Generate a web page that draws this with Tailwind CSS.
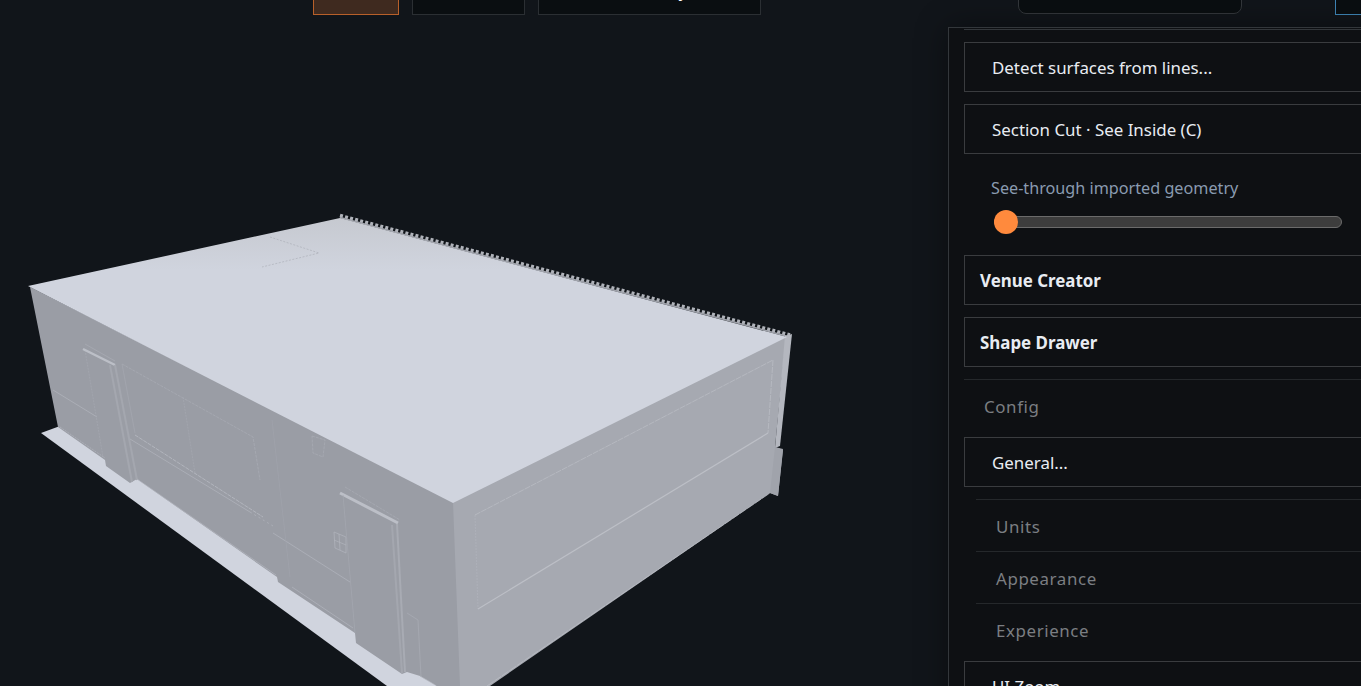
<!DOCTYPE html>
<html lang="en">
<head>
  <meta charset="UTF-8" />
  <title>Venue Viewer</title>
  <script src="https://cdn.jsdelivr.net/npm/@tailwindcss/browser@4"></script>
</head>
<body class="bg-[#11151a] overflow-hidden font-['Noto_Sans',sans-serif]">
  <div class="relative w-[1361px] h-[686px] overflow-hidden">

    <!-- 3D viewport -->
    <svg class="absolute inset-0" width="1361" height="686" viewBox="0 0 1361 686" fill="none">
      <defs>
        <linearGradient id="roofShade" gradientUnits="userSpaceOnUse" x1="0" y1="218" x2="0" y2="270">
          <stop offset="0" stop-color="#c6c9d0" />
          <stop offset="1" stop-color="#d0d4de" />
        </linearGradient>
      </defs>

      <!-- ground slab -->
      <polygon fill="#d0d4de" points="41,433 60,426 300,560 437,686 387,686" />

      <!-- back edge teeth -->
      <line x1="340" y1="215.5" x2="790" y2="335" stroke="#b0b3ba" stroke-width="3.5" stroke-dasharray="3 2.2" />
      <line x1="340" y1="217.5" x2="790" y2="337" stroke="#a0a3ab" stroke-width="1.5" />

      <!-- left wall -->
      <polygon fill="#9a9da5" points="30,287 455,502 462,686 437,686 420,676 407,672 402,674 356,643 355,633 278,582 277,577 137,479 130,483 106,466 105,460 58,427" />
      <!-- right wall -->
      <polygon fill="#a6a9b1" points="453,502 786,336 775,447 783,450 778,496 770,493 490,686 460,686" />
      <polygon fill="#b4b7bf" points="785,336 792,334 780,446 775,448" />
      <polygon fill="#a0a3ab" points="775,447 783,449 778,496 770,493" />

      <!-- roof -->
      <polygon fill="url(#roofShade)" points="28,286 340,218 787,337 453,503" />
      <polyline stroke="#a8abb3" stroke-width="0.6" stroke-dasharray="2 1.5" points="270,237 319,253 262,267" />

      <!-- left wall details -->
      <g stroke="#b2b5bd" stroke-width="0.7">
        <line x1="53" y1="390" x2="97" y2="417" />
        <line x1="60" y1="427" x2="105" y2="458" stroke-dasharray="2 1" />
        <line x1="85" y1="350" x2="103" y2="457" stroke="#a5a8b0" stroke-dasharray="2 1" />
        <line x1="85" y1="344" x2="115" y2="361" stroke="#a9acb4" />
        <line x1="83" y1="349" x2="115" y2="365" stroke="#bcbfc7" stroke-width="2.5" />
        <line x1="110" y1="365" x2="132" y2="482" stroke="#a4a7af" stroke-width="2" />
        <line x1="115" y1="365" x2="137" y2="480" stroke="#a4a7af" stroke-width="2" />
        <polyline points="122,364 253,437 260,480" stroke="#a9acb4" stroke-dasharray="3 1" />
        <line x1="122" y1="364" x2="135" y2="433" stroke="#a5a8b0" />
        <line x1="135" y1="435" x2="263" y2="517" stroke-width="1" stroke-dasharray="4 1" />
        <line x1="130" y1="439" x2="250" y2="512" />
        <line x1="250" y1="512" x2="273" y2="526" stroke-dasharray="2 3" />
        <line x1="273" y1="533" x2="350" y2="582" />
        <line x1="183" y1="397" x2="195" y2="473" stroke="#a5a8b0" stroke-dasharray="2 1" />
        <line x1="137" y1="479" x2="276" y2="575" />
        <line x1="292" y1="587" x2="353" y2="628" />
        <line x1="272" y1="420" x2="290" y2="577" stroke="#a1a4ac" />
        <polygon points="312,436 325,440 323,457 313,453" stroke="#a9acb4" stroke-dasharray="3 1" />
        <polygon points="334,532 346,537 346,553 335,548" />
        <line x1="339" y1="534" x2="340" y2="550" />
        <line x1="334" y1="540" x2="346" y2="545" />
        <line x1="345" y1="487" x2="400" y2="520" stroke="#a9acb4" stroke-dasharray="3 1" />
        <line x1="340" y1="493" x2="398" y2="523" stroke="#bcbfc7" stroke-width="3" />
        <line x1="343" y1="495" x2="355" y2="633" stroke="#a5a8b0" />
        <line x1="392" y1="525" x2="402" y2="673" stroke="#a4a7af" stroke-width="2" />
        <line x1="397" y1="524" x2="405" y2="672" stroke="#a8abb3" stroke-width="2" />
        <polyline points="407,613 418,620 421,677" stroke="#a9acb4" />
        <line x1="420" y1="676" x2="437" y2="686" />
      </g>

      <!-- right wall details -->
      <g stroke="#bcbfc6" stroke-width="0.7">
        <polyline points="475,515 773,360 768,433" stroke-dasharray="6 1" />
        <line x1="475" y1="515" x2="478" y2="609" stroke="#b0b3bb" stroke-dasharray="2 1" />
        <line x1="478" y1="609" x2="768" y2="433" stroke-width="1.2" />
        <line x1="487" y1="686" x2="770" y2="493" stroke-dasharray="8 1" />
      </g>
    </svg>

    <!-- top toolbar, scrolled mostly out of view -->
    <div class="absolute top-[-36px] left-[313px] flex gap-[13px] text-white text-base">
      <div class="w-[86px] h-[51px] bg-[#3f2a1f] border border-[#b8602a]"></div>
      <div class="w-[113px] h-[51px] bg-[#0a0e11] border border-[#2b2f33]"></div>
      <div class="w-[223px] h-[51px] bg-[#0a0e11] border border-[#2b2f33] flex items-center justify-center pt-[2px]">Geometry</div>
    </div>
    <div class="absolute top-[-37px] left-[1018px] w-[224px] h-[51px] bg-[#0a0e11] border border-[#33373b] rounded-lg"></div>
    <div class="absolute top-[-37px] left-[1335px] w-[60px] h-[52px] bg-[#0a0e11] border border-[#3f86b8]"></div>

    <!-- side panel -->
    <div class="absolute left-[948px] top-[27px] w-[520px] h-[700px] bg-[#0e1013] border-l border-t border-[#33373b] pl-[15px] shadow-[0_0_30px_rgba(0,0,0,0.4)] text-[16.9px] text-[#e8ecf2]">
      <div class="h-[2px] border-b border-[#33373b]"></div>

      <button class="mt-[12px] flex items-center w-full h-[50px] border border-[#3a3c3f] pl-[27px] pt-[2px]">Detect surfaces from lines...</button>
      <button class="mt-[12px] flex items-center w-full h-[50px] border border-[#3a3c3f] pl-[27px] pt-[2px]">Section Cut · See Inside (C)</button>

      <div class="h-[101px] pl-[27px] pt-[22px]">
        <div class="text-[#8a9bb0] text-[16.2px] leading-[24px]">See-through imported geometry</div>
        <div class="relative mt-[16px] ml-[3px] w-[348px] h-[12px] rounded-full bg-[#3d3d3d] border border-[#6b6b6b]">
          <div class="absolute left-[-1px] top-[-7px] w-[24px] h-[24px] rounded-full bg-[#ff8a3d]"></div>
        </div>
      </div>

      <button class="flex items-center w-full h-[50px] border border-[#3a3c3f] pl-[15px] pt-[2px] font-bold">Venue Creator</button>
      <button class="mt-[12px] flex items-center w-full h-[50px] border border-[#3a3c3f] pl-[15px] pt-[2px] font-bold">Shape Drawer</button>

      <div class="mt-[12px] h-[58px] pb-[4px] border-t border-[#25282b] pl-[20px] flex items-center text-[#7b7e82] tracking-[0.6px]">Config</div>

      <button class="flex items-center w-full h-[50px] border border-[#3a3c3f] pl-[27px] pt-[2px]">General...</button>

      <div class="ml-[12px] mt-[12px] text-[#7b7e82] tracking-[0.6px]">
        <div class="h-[52px] border-t border-[#25282b] pl-[20px] pt-[2px] flex items-center">Units</div>
        <div class="h-[52px] border-t border-[#25282b] pl-[20px] pt-[2px] flex items-center">Appearance</div>
        <div class="h-[52px] border-t border-[#25282b] pl-[20px] pt-[2px] flex items-center">Experience</div>
      </div>

      <button class="mt-[6px] flex items-center w-full h-[50px] border border-[#3a3c3f] pl-[27px] pt-[2px]">UI Zoom</button>
    </div>
  </div>
</body>
</html>
